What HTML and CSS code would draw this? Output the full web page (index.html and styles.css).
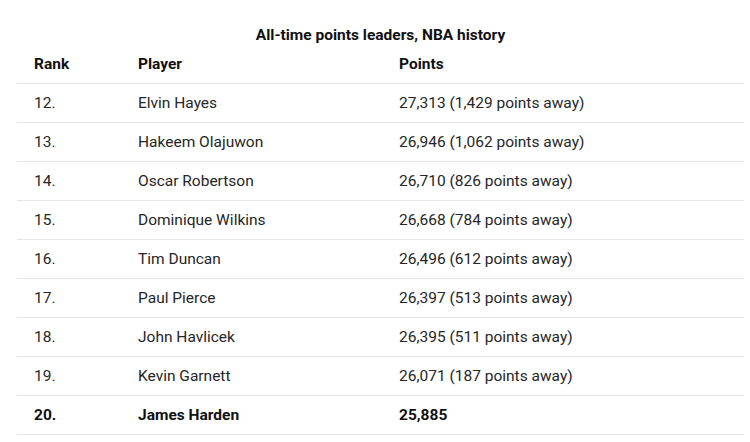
FILE: index.html
```html
<!DOCTYPE html>
<html lang="en">
<head>
<meta charset="utf-8">
<title>All-time points leaders, NBA history</title>
<link rel="stylesheet" href="styles.css">
</head>
<body>
<div class="wrap">
  <h1 class="title">All-time points leaders, NBA history</h1>
  <div class="table">
    <div class="row head"><div class="cell">Rank</div><div class="cell">Player</div><div class="cell">Points</div></div>
    <div class="row"><div class="cell">12.</div><div class="cell">Elvin Hayes</div><div class="cell">27,313 (1,429 points away)</div></div>
    <div class="row"><div class="cell">13.</div><div class="cell">Hakeem Olajuwon</div><div class="cell">26,946 (1,062 points away)</div></div>
    <div class="row"><div class="cell">14.</div><div class="cell">Oscar Robertson</div><div class="cell">26,710 (826 points away)</div></div>
    <div class="row"><div class="cell">15.</div><div class="cell">Dominique Wilkins</div><div class="cell">26,668 (784 points away)</div></div>
    <div class="row"><div class="cell">16.</div><div class="cell">Tim Duncan</div><div class="cell">26,496 (612 points away)</div></div>
    <div class="row"><div class="cell">17.</div><div class="cell">Paul Pierce</div><div class="cell">26,397 (513 points away)</div></div>
    <div class="row"><div class="cell">18.</div><div class="cell">John Havlicek</div><div class="cell">26,395 (511 points away)</div></div>
    <div class="row"><div class="cell">19.</div><div class="cell">Kevin Garnett</div><div class="cell">26,071 (187 points away)</div></div>
    <div class="row strong"><div class="cell">20.</div><div class="cell">James Harden</div><div class="cell">25,885</div></div>
  </div>
</div>
</body>
</html>
```
FILE: styles.css
```css
html, body {
  margin: 0;
  padding: 0;
  background: #ffffff;
}
body {
  font-family: Roboto, "Liberation Sans", Arial, sans-serif;
  color: #262626;
  font-size: 15.5px;
}
.wrap {
  width: 727px;
  margin-left: 17px;
  padding-top: 25px;
}
.title {
  margin: 0;
  font-size: 15.5px;
  font-weight: 700;
  line-height: 20px;
  text-align: center;
  color: #111111;
}
.table {
  display: flex;
  flex-direction: column;
}
.row {
  display: grid;
  grid-template-columns: 104px 261px 1fr;
  height: 38px;
  align-items: center;
  border-bottom: 1px solid #e6e6e6;
}
.cell {
  padding-left: 17px;
  line-height: 20px;
}
.head, .strong {
  font-weight: 700;
  color: #111111;
}
```
